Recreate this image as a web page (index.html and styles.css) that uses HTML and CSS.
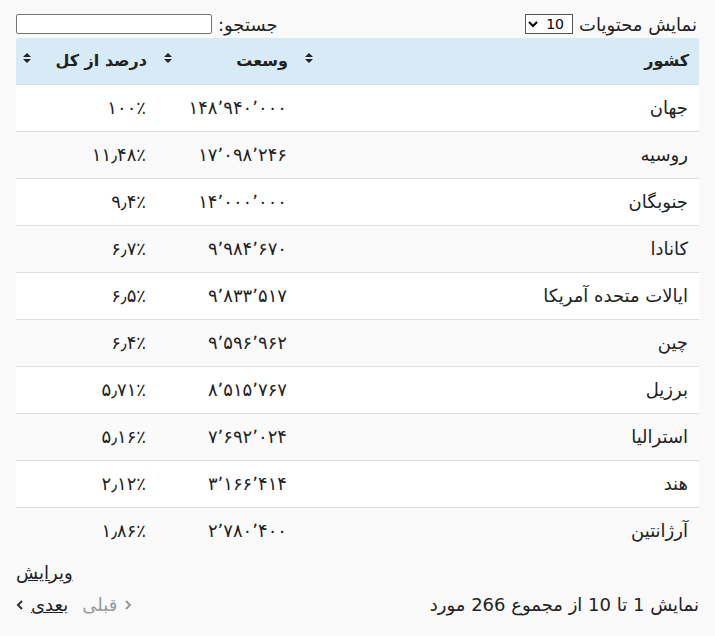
FILE: index.html
```html
<!DOCTYPE html>
<html lang="fa" dir="rtl">
<head>
<meta charset="utf-8">
<title>کشورها</title>
<link rel="stylesheet" href="styles.css">
</head>
<body>
<div class="wrap">
  <div class="top">
    <label class="length">نمایش محتویات
      <select class="len-select"><option>10</option><option>25</option><option>50</option></select>
    </label>
    <label class="search">جستجو: <input type="text" class="search-input"></label>
  </div>
  <table class="grid">
    <thead>
      <tr>
        <th class="c1"><div class="th-in"><span>کشور</span><svg class="sort" width="8" height="10" viewBox="0 0 8 10"><path d="M4 0L8 4H0z M4 10L8 6H0z" fill="#222"/></svg></div></th>
        <th class="c2"><div class="th-in"><span>وسعت</span><svg class="sort" width="8" height="10" viewBox="0 0 8 10"><path d="M4 0L8 4H0z M4 10L8 6H0z" fill="#222"/></svg></div></th>
        <th class="c3"><div class="th-in"><span>درصد از کل</span><svg class="sort" width="8" height="10" viewBox="0 0 8 10"><path d="M4 0L8 4H0z M4 10L8 6H0z" fill="#222"/></svg></div></th>
      </tr>
    </thead>
    <tbody>
      <tr><td>جهان</td><td>۱۴۸٬۹۴۰٬۰۰۰</td><td>۱۰۰٪</td></tr>
      <tr><td>روسیه</td><td>۱۷٬۰۹۸٬۲۴۶</td><td>۱۱٫۴۸٪</td></tr>
      <tr><td>جنوبگان</td><td>۱۴٬۰۰۰٬۰۰۰</td><td>۹٫۴٪</td></tr>
      <tr><td>کانادا</td><td>۹٬۹۸۴٬۶۷۰</td><td>۶٫۷٪</td></tr>
      <tr><td>ایالات متحده آمریکا</td><td>۹٬۸۳۳٬۵۱۷</td><td>۶٫۵٪</td></tr>
      <tr><td>چین</td><td>۹٬۵۹۶٬۹۶۲</td><td>۶٫۴٪</td></tr>
      <tr><td>برزیل</td><td>۸٬۵۱۵٬۷۶۷</td><td>۵٫۷۱٪</td></tr>
      <tr><td>استرالیا</td><td>۷٬۶۹۲٬۰۲۴</td><td>۵٫۱۶٪</td></tr>
      <tr><td>هند</td><td>۳٬۱۶۶٬۴۱۴</td><td>۲٫۱۲٪</td></tr>
      <tr><td>آرژانتین</td><td>۲٬۷۸۰٬۴۰۰</td><td>۱٫۸۶٪</td></tr>
    </tbody>
  </table>
  <div class="edit"><a class="edit-link" href="#">ویرایش</a></div>
  <div class="bottom">
    <div class="info">نمایش 1 تا 10 از مجموع 266 مورد</div>
    <div class="pager">
      <span class="pg prev"><svg class="chev" width="8" height="10" viewBox="0 0 8 10"><path d="M2 1L6 5L2 9" fill="none" stroke="#999" stroke-width="2"/></svg>قبلی</span>
      <a class="pg next" href="#">بعدی<svg class="chev" width="8" height="10" viewBox="0 0 8 10"><path d="M6 1L2 5L6 9" fill="none" stroke="#333" stroke-width="2"/></svg></a>
    </div>
  </div>
</div>
</body>
</html>
```
FILE: styles.css
```css
html, body {
  margin: 0;
  padding: 0;
  background: #f9f9f9;
}
body {
  font-family: "DejaVu Sans", sans-serif;
  font-size: 18px;
  color: #222;
  direction: rtl;
}
.wrap {
  padding: 12px 16px 0 16px;
}
.top {
  display: flex;
  justify-content: space-between;
  align-items: center;
  height: 24px;
  padding-right: 2px;
}
.length, .search {
  display: flex;
  align-items: center;
  gap: 6px;
}
.len-select {
  width: 48px;
  height: 20px;
  font-family: "DejaVu Sans", sans-serif;
  font-size: 14px;
  border: 1px solid #555;
  border-radius: 0;
  background: #fff;
  padding: 0 4px;
}
.search-input {
  width: 192px;
  height: 16px;
  border: 1px solid #767676;
  border-radius: 2px;
  background: #fff;
  padding: 1px 1px;
  margin: 0;
}
.grid {
  width: 100%;
  border-collapse: collapse;
  margin-top: 2px;
}
.grid th {
  background: #d8eaf6;
  font-weight: bold;
  font-size: 16px;
  text-align: right;
  padding: 13px 10px 14px 7px;
  line-height: 19px;
}
.th-in {
  display: flex;
  justify-content: space-between;
  align-items: center;
}
.sort {
  display: block;
  margin-top: -5px;
}
.c2, .c3 {
  width: 124px;
}
.grid td {
  padding: 12px 11px 13px 10px;
  line-height: 21px;
  border-top: 1px solid #ddd;
  text-align: right;
}
.grid tbody tr:nth-child(odd) td {
  background: #fff;
}
.grid tbody tr:nth-child(even) td {
  background: #fafafa;
}
.edit {
  text-align: left;
  margin-top: 8px;
  line-height: 22px;
}
.edit-link {
  color: #222;
  text-decoration: underline;
}
.bottom {
  display: flex;
  justify-content: space-between;
  align-items: center;
  margin-top: 10px;
  line-height: 22px;
}
.pager {
  display: flex;
  align-items: center;
  gap: 14px;
}
.pg {
  display: flex;
  align-items: center;
  gap: 7px;
}
.prev {
  color: #999;
}
.next {
  color: #222;
  text-decoration: underline;
}
.chev {
  display: block;
}
```
